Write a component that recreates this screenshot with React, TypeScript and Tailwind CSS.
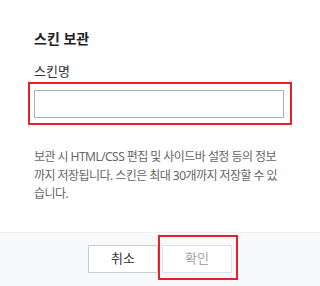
import * as React from "react";

export default function App() {
  return (
    <div
      className="flex h-[286px] w-[320px] flex-col bg-white"
      style={{ fontFamily: '"Noto Sans", "Noto Sans CJK KR", sans-serif' }}
    >
      {/* Body */}
      <div className="flex-1 px-[34px] pt-[29px]">
        <div className="text-[14px] font-bold leading-[20px] text-[#222]">스킨 보관</div>

        <div className="mt-[13px] text-[13px] leading-[19px] text-[#333]">스킨명</div>

        <div className="-mx-[6px] mt-[1px] border-2 border-[#e8202a] px-[4px] pb-[5px] pt-[6px]">
          <input
            type="text"
            className="block h-[28px] w-[250px] border border-[#a9b0bb] bg-white px-2 text-[13px] outline-none"
          />
        </div>

        <p className="mt-[23px] text-[12px] leading-[18.5px] tracking-[-0.55px] text-[#666]">
          보관 시 HTML/CSS 편집 및 사이드바 설정 등의 정보까지 저장됩니다. 스킨은 최대 30개까지 저장할 수 있습니다.
        </p>
      </div>

      {/* Footer */}
      <div className="flex h-[54px] shrink-0 items-start justify-center gap-[4px] border-t border-[#eef0f3] bg-[#f8f9fb] pt-[12px]">
        <button className="h-[28px] w-[70px] border border-[#c9ccd2] bg-white text-[13px] text-[#333]">
          취소
        </button>
        <div className="relative">
          <button className="block h-[28px] w-[70px] border border-[#dde1e8] bg-white text-[13px] text-[#a0a4aa]">
            확인
          </button>
          <div className="pointer-events-none absolute -bottom-[7px] -left-[4px] -right-[6px] -top-[10px] border-2 border-[#e8202a]" />
        </div>
      </div>
    </div>
  );
}
